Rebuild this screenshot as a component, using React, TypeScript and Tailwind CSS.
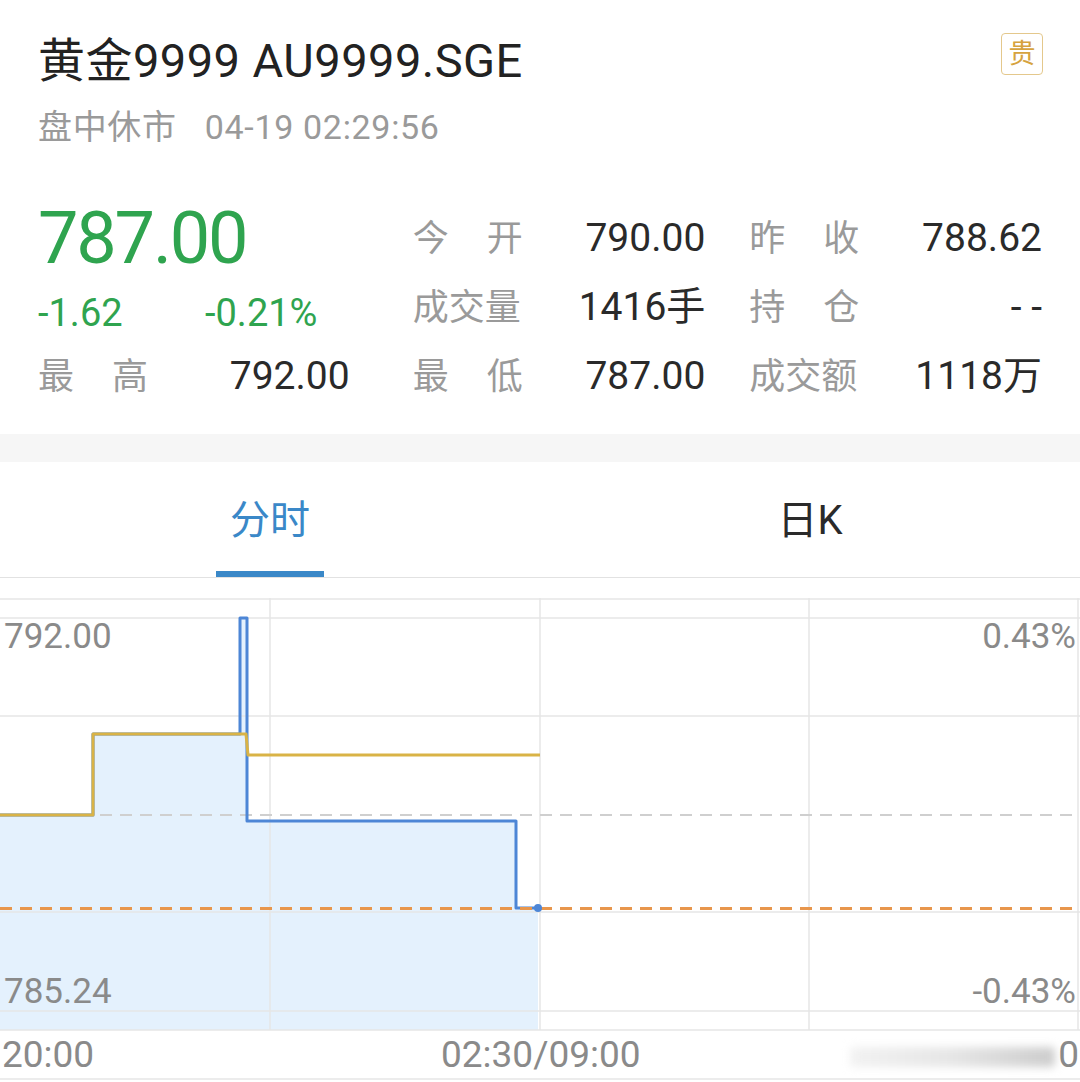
import React from 'react'

const CJK = "font-['Roboto','Noto_Sans_CJK_SC',sans-serif]"

function Label({ text }: { text: string }) {
    // two-character labels are spread across the full label width
    const chars = text.split('')
    return (
        <div className={`flex w-[110px] ${chars.length === 2 ? 'justify-between' : 'justify-start'} text-[36px] leading-none text-[#9a9a9a]`}>
            {chars.map((c, i) => (
                <span key={i}>{c}</span>
            ))}
        </div>
    )
}

function Stat({ label, value }: { label: string; value: string }) {
    return (
        <div className="flex h-[69px] items-center">
            <Label text={label} />
            <div className="flex-1 text-right text-[39px] leading-none text-[#2a2a2a]">{value}</div>
        </div>
    )
}

function Chart() {
    const fill = '0,217 93,217 93,136 240,136 240,20 247,20 247,223 516,223 516,310 538,310 538,432 0,432'
    const price = '0,217 93,217 93,136 240,136 240,20 247,20 247,223 516,223 516,310 538,310'
    const avg = '0,217 93,217 93,136 246,136 248,157 540,157'
    return (
        <div className="relative h-[483px] w-full">
            <svg width="1080" height="483" viewBox="0 0 1080 483" className="absolute inset-0">
                <rect x="0" y="0" width="1080" height="483" fill="#fff" />
                <polygon points={fill} fill="#e4f1fd" />
                {[1, 20, 118, 314, 413, 432, 481].map((y) => (
                    <line key={y} x1="0" x2="1080" y1={y} y2={y} stroke="#e6e6e6" strokeWidth="1.5" />
                ))}
                {[270, 540, 809, 1078].map((x) => (
                    <line key={x} x1={x} x2={x} y1="0" y2="432" stroke="#e6e6e6" strokeWidth="1.5" />
                ))}
                <line x1="0" x2="1080" y1="217" y2="217" stroke="#cfcfcf" strokeWidth="2" strokeDasharray="12 8" />
                <polyline points={price} fill="none" stroke="#4d86d6" strokeWidth="3" strokeLinejoin="round" />
                <polyline points={avg} fill="none" stroke="#d9b346" strokeWidth="3" strokeLinejoin="round" />
                <line x1="0" x2="1080" y1="310.5" y2="310.5" stroke="#e8964c" strokeWidth="3" strokeDasharray="12 8" />
                <circle cx="538" cy="310" r="4" fill="#4d86d6" />
            </svg>
            <div className="absolute left-[4px] top-[19px] text-[35px] leading-[40px] text-[#8a8a8a]">792.00</div>
            <div className="absolute right-[4px] top-[19px] text-[35px] leading-[40px] text-[#8a8a8a]">0.43%</div>
            <div className="absolute bottom-[69px] left-[4px] text-[35px] leading-[40px] text-[#8a8a8a]">785.24</div>
            <div className="absolute bottom-[69px] right-[4px] text-[35px] leading-[40px] text-[#8a8a8a]">-0.43%</div>
            <div className="absolute bottom-[4px] left-[2px] text-[37px] leading-[44px] text-[#8a8a8a]">20:00</div>
            <div className="absolute bottom-[4px] left-[441px] text-[37px] leading-[44px] text-[#8a8a8a]">02:30/09:00</div>
            <div className="absolute bottom-[14px] left-[850px] h-[20px] w-[205px] rounded-sm bg-gradient-to-r from-[#f2f2f2] via-[#e6e6e6] to-[#cdcdcd] blur-[4px]" />
            <div className="absolute bottom-[4px] right-[1px] text-[37px] leading-[44px] text-[#8a8a8a]">0</div>
        </div>
    )
}

export default function App() {
    return (
        <div className={`w-[1080px] bg-white ${CJK}`}>
            <header className="px-[38px] pt-[31px]">
                <div className="flex items-start justify-between">
                    <h1 className="text-[47px] leading-[60px] tracking-[0.01em] text-[#222]">黄金9999 AU9999.SGE</h1>
                    <div className="mr-[-1px] mt-[2px] flex h-[42px] w-[42px] items-center justify-center rounded-[4px] border-[1.5px] border-[#e4c88c] text-[27px] leading-none text-[#d6a33e]">
                        贵
                    </div>
                </div>
                <div className="mt-[16px] flex gap-[28px] text-[34px] leading-[40px] tracking-[0.02em] text-[#9a9a9a]">
                    <span>盘中休市</span>
                    <span>04-19 02:29:56</span>
                </div>
            </header>

            <section className="flex px-[38px] pt-[57px] pb-[23px]">
                <div className="w-[312px]">
                    <div className="flex h-[69px] items-center text-[72px] leading-none tracking-[-0.03em] text-[#2fa44f]">787.00</div>
                    <div className="flex h-[69px] items-center pt-[10px] text-[38px] leading-none text-[#2fa44f]">
                        <span className="w-[167px]">-1.62</span>
                        <span>-0.21%</span>
                    </div>
                    <div className="flex h-[69px] items-center">
                        <div className="flex w-[110px] justify-between text-[36px] leading-none text-[#9a9a9a]">
                            <span>最</span>
                            <span>高</span>
                        </div>
                        <div className="flex-1 text-right text-[39px] leading-none text-[#2a2a2a]">792.00</div>
                    </div>
                </div>
                <div className="ml-[63px] grid w-[630px] grid-cols-2 gap-x-[44px]">
                    <Stat label="今开" value="790.00" />
                    <Stat label="昨收" value="788.62" />
                    <Stat label="成交量" value="1416手" />
                    <Stat label="持仓" value="- -" />
                    <Stat label="最低" value="787.00" />
                    <Stat label="成交额" value="1118万" />
                </div>
            </section>

            <div className="h-[28px] bg-[#f6f6f6]" />

            <nav className="grid grid-cols-2 border-b-[1.5px] border-[#e2e2e2]">
                <div className="flex flex-col items-center">
                    <div className="flex h-[109px] items-center pt-[8px] text-[40px] leading-none text-[#3a88c8]">分时</div>
                    <div className="h-[6px] w-[108px] bg-[#3a88c8]" />
                </div>
                <div className="flex flex-col items-center">
                    <div className="flex h-[109px] items-center pt-[8px] text-[40px] leading-none text-[#2a2a2a]">日K</div>
                </div>
            </nav>

            <div className="h-[20px]" />
            <Chart />
        </div>
    )
}
